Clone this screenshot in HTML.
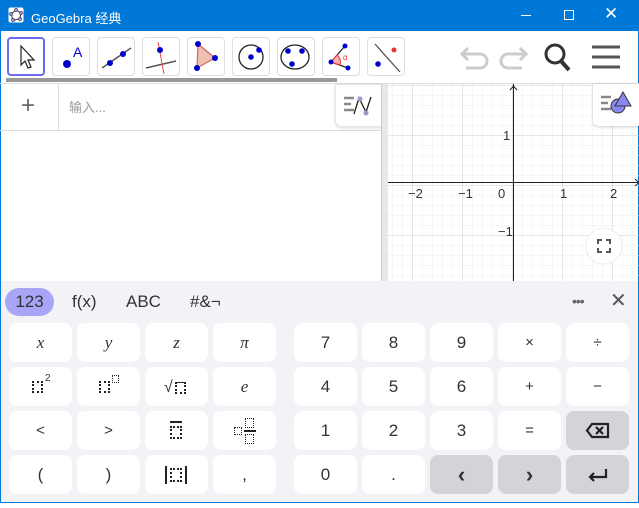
<!DOCTYPE html>
<html><head><meta charset="utf-8"><style>
*{margin:0;padding:0;box-sizing:border-box}
body{width:639px;height:503px;overflow:hidden;background:#fff;font-family:"Liberation Sans","Noto Sans CJK SC",sans-serif;position:relative}
.a{position:absolute}
.tb{left:0;top:0;width:639px;height:31px;background:#0078d7;color:#fff;font-size:13px}
.btn{position:absolute;top:37px;width:38px;height:39px;border:1px solid #ddd;border-radius:4px;background:#fff}
.k{position:absolute;width:63px;height:39px;background:#fff;border-radius:8px;text-align:center;line-height:39px;font-size:17px;color:#333}
.g{background:#d3d3d8}
.it{font-family:"Liberation Serif",serif;font-style:italic}
.tab{position:absolute;top:288px;height:28px;line-height:28px;font-size:17px;color:#333}
.d{position:absolute;border:2px dotted #222}
</style></head><body>
<div class="a tb">
<svg class="a" style="left:8px;top:7px" width="16" height="16"><rect x="0.5" y="0.5" width="15" height="15" rx="2" fill="#fff"/><polygon points="8,3 13,6 12,12 5,13 3,7" fill="none" stroke="#555" stroke-width="1.2"/><g fill="#99f" stroke="#333" stroke-width=".6"><circle cx="8" cy="3" r="1.6"/><circle cx="13" cy="6" r="1.6"/><circle cx="12" cy="12" r="1.6"/><circle cx="5" cy="13" r="1.6"/><circle cx="3" cy="7" r="1.6"/></g></svg>
<div class="a" style="left:31px;top:8px">GeoGebra 经典</div>
<div class="a" style="left:521px;top:15px;width:10px;height:1px;background:#fff"></div>
<div class="a" style="left:564px;top:10px;width:10px;height:10px;border:1px solid #fff"></div>
<div class="a" style="left:604px;top:4px;font-size:17px">✕</div>
</div>
<div class="a" style="left:0;top:31px;width:1px;height:472px;background:#0078d7"></div>
<div class="a" style="right:0;top:31px;width:1px;height:472px;background:#0078d7"></div>
<div class="a" style="left:0;bottom:0;width:639px;height:1px;background:#0078d7"></div>

<div class="btn" style="left:7px;border:2px solid #6b6bf0"><svg width="34" height="35"><path d="M12 7 L12 26 L16 22 L19 29 L22 28 L19 21 L25 21 Z" fill="#fff" stroke="#222" stroke-width="1.2"/></svg></div>
<div class="btn" style="left:52px"><svg width="36" height="37"><circle cx="14" cy="26" r="4" fill="#00c"/><text x="20" y="19" font-size="14" fill="#00c" font-family="Liberation Sans">A</text></svg></div>
<div class="btn" style="left:97px"><svg width="36" height="37"><line x1="4" y1="30" x2="33" y2="10" stroke="#555" stroke-width="1.5"/><circle cx="12" cy="25" r="3" fill="#00c"/><circle cx="25" cy="16" r="3" fill="#00c"/></svg></div>
<div class="btn" style="left:142px"><svg width="36" height="37"><line x1="3" y1="30" x2="33" y2="23" stroke="#555" stroke-width="1.5"/><line x1="15" y1="4" x2="21" y2="36" stroke="#e44" stroke-width="1"/><circle cx="17" cy="12" r="3" fill="#00c"/></svg></div>
<div class="btn" style="left:187px"><svg width="36" height="37"><polygon points="10,6 27,20 9,30" fill="#f0c0b0" stroke="#c66" stroke-width="1.2"/><g fill="#00c"><circle cx="10" cy="6" r="3"/><circle cx="27" cy="20" r="3"/><circle cx="9" cy="30" r="3"/></g></svg></div>
<div class="btn" style="left:232px"><svg width="36" height="37"><circle cx="18" cy="19" r="12" fill="none" stroke="#222" stroke-width="1.3"/><circle cx="18" cy="19" r="2.8" fill="#00c"/><circle cx="26" cy="12" r="2.8" fill="#00c"/></svg></div>
<div class="btn" style="left:277px"><svg width="36" height="37"><ellipse cx="17" cy="19" rx="14" ry="12" fill="none" stroke="#222" stroke-width="1.3"/><g fill="#00c"><circle cx="10" cy="13" r="2.8"/><circle cx="24" cy="13" r="2.8"/><circle cx="14" cy="26" r="2.8"/></g></svg></div>
<div class="btn" style="left:322px"><svg width="36" height="37"><path d="M8 24 L22 8 M8 24 L25 30" stroke="#222" stroke-width="1.2" fill="none"/><path d="M8 24 L14 17 A9 9 0 0 1 17 27 Z" fill="#f8b0b0" stroke="#e33"/><text x="20" y="22" font-size="8" fill="#e33">α</text><g fill="#00c"><circle cx="22" cy="8" r="2.5"/><circle cx="8" cy="24" r="2.5"/><circle cx="25" cy="30" r="2.5"/></g></svg></div>
<div class="btn" style="left:367px"><svg width="36" height="37"><line x1="7" y1="6" x2="32" y2="34" stroke="#555" stroke-width="1.3"/><circle cx="10" cy="26" r="2.8" fill="#00c"/><circle cx="26" cy="12" r="2.5" fill="#e33"/></svg></div>
<svg class="a" style="left:458px;top:42px" width="170" height="34"><g stroke="#ccc" stroke-width="3" fill="none"><path d="M10 6 L4 12 L10 18 M4 12 H22 a7 7 0 0 1 0 14 H8"/><path d="M62 6 L68 12 L62 18 M68 12 H50 a7 7 0 0 0 0 14 H64"/></g><circle cx="97" cy="12" r="9" fill="none" stroke="#333" stroke-width="3"/><line x1="103" y1="19" x2="111" y2="28" stroke="#333" stroke-width="4"/><g stroke="#555" stroke-width="3"><line x1="134" y1="5" x2="162" y2="5"/><line x1="134" y1="15" x2="162" y2="15"/><line x1="134" y1="25" x2="162" y2="25"/></g></svg>
<div class="a" style="left:6px;top:78px;width:331px;height:4px;background:#999"></div>
<div class="a" style="left:0;top:83px;width:639px;height:1px;background:#ddd"></div>

<div class="a" style="left:21px;top:92px;font-size:24px;color:#666;font-weight:300">+</div>
<div class="a" style="left:58px;top:84px;width:1px;height:47px;background:#ddd"></div>
<div class="a" style="left:69px;top:97px;font-size:13px;color:#999">输入...</div>
<div class="a" style="left:0;top:130px;width:381px;height:1px;background:#ddd"></div>
<div class="a" style="left:335px;top:84px;width:47px;height:43px;background:#fff;border:1px solid #e6e6e6;border-radius:0 0 0 6px;box-shadow:0 1px 3px rgba(0,0,0,.15)"><svg width="46" height="42"><g stroke="#888" stroke-width="2.5"><line x1="8" y1="13" x2="18" y2="13"/><line x1="8" y1="19" x2="15" y2="19"/><line x1="8" y1="25" x2="18" y2="25"/></g><path d="M18 29 L23 13 L30 27 L35 12" stroke="#222" stroke-width="1.3" fill="none"/><circle cx="24" cy="14" r="2.5" fill="#99c"/><circle cx="30" cy="28" r="2.5" fill="#99c"/></svg></div>
<div class="a" style="left:381px;top:84px;width:7px;height:197px;background:#e8e8e8;border-left:1px solid #ccc"></div>

<svg class="a" style="left:388px;top:84px" width="251" height="197">
<defs><pattern id="mi" x="-5" y="-8" width="10" height="10" patternUnits="userSpaceOnUse"><path d="M10 0 V10 M0 10 H10" stroke="#eee" stroke-width="1"/></pattern>
<pattern id="ma" x="-25" y="-48" width="50" height="50" patternUnits="userSpaceOnUse"><path d="M50 0 V50 M0 50 H50" stroke="#ccc" stroke-width="1"/></pattern></defs>
<rect width="251" height="197" fill="url(#mi)"/><rect width="251" height="197" fill="url(#ma)"/>
<line x1="125.5" y1="0" x2="125.5" y2="197" stroke="#222"/><line x1="0" y1="98.5" x2="251" y2="98.5" stroke="#222"/>
<path d="M122 6 L125.5 2 L129 6" stroke="#222" fill="none"/><path d="M247 95 L251 98.5 L247 102" stroke="#222" fill="none"/>
<g font-size="13" fill="#333" font-family="Liberation Sans"><text x="20" y="114">−2</text><text x="70" y="114">−1</text><text x="110" y="114">0</text><text x="172" y="114">1</text><text x="222" y="114">2</text><text x="110" y="152">−1</text><text x="115" y="56">1</text></g>
<circle cx="216" cy="162" r="18" fill="#fff" stroke="#eee"/><path d="M210 160 v-4 h4 M218 156 h4 v4 M222 164 v4 h-4 M214 168 h-4 v-4" stroke="#555" stroke-width="2" fill="none"/>
</svg>
<div class="a" style="left:593px;top:84px;width:46px;height:42px;background:#fff;border-radius:0 0 0 6px;box-shadow:0 1px 3px rgba(0,0,0,.2)"><svg width="46" height="42"><g stroke="#888" stroke-width="2.5"><line x1="8" y1="13" x2="18" y2="13"/><line x1="8" y1="19" x2="15" y2="19"/><line x1="8" y1="25" x2="18" y2="25"/></g><circle cx="25" cy="22" r="7" fill="#88e" stroke="#333"/><polygon points="30,8 38,22 22,22" fill="#88e" stroke="#333"/></svg></div>

<div class="a" style="left:1px;top:281px;width:637px;height:221px;background:#f3f2f7"></div>
<div class="tab" style="left:5px;width:49px;background:#a9a5f6;border-radius:14px;text-align:center">123</div>
<div class="tab" style="left:72px">f(x)</div>
<div class="tab" style="left:126px">ABC</div>
<div class="tab" style="left:190px">#&amp;¬</div>
<div class="a" style="left:572px;top:293px;font-size:14px;color:#666;letter-spacing:-1px">•••</div>
<div class="a" style="left:610px;top:288px;font-size:20px;color:#555">✕</div>

<div class="k it" style="left:9px;top:323px">x</div>
<div class="k it" style="left:77px;top:323px">y</div>
<div class="k it" style="left:145px;top:323px">z</div>
<div class="k it" style="left:213px;top:323px">π</div>
<div class="k" style="left:294px;top:323px">7</div>
<div class="k" style="left:362px;top:323px">8</div>
<div class="k" style="left:430px;top:323px">9</div>
<div class="k" style="left:498px;top:323px;font-size:15px">×</div>
<div class="k" style="left:566px;top:323px;font-size:15px">÷</div>

<div class="k" style="left:9px;top:367px"><span class="d" style="left:23px;top:14px;width:11px;height:12px"></span><span class="a" style="left:36px;top:7px;font-size:10px;line-height:10px">2</span></div>
<div class="k" style="left:77px;top:367px"><span class="d" style="left:22px;top:14px;width:11px;height:12px"></span><span class="d" style="left:35px;top:8px;width:7px;height:8px;border-width:1.5px"></span></div>
<div class="k" style="left:145px;top:367px"><span class="a" style="left:19px;top:1px;font-size:16px">√</span><span class="d" style="left:30px;top:15px;width:11px;height:12px;border-top:1.5px solid #222"></span></div>
<div class="k it" style="left:213px;top:367px">e</div>
<div class="k" style="left:294px;top:367px">4</div>
<div class="k" style="left:362px;top:367px">5</div>
<div class="k" style="left:430px;top:367px">6</div>
<div class="k" style="left:498px;top:367px;font-size:15px">+</div>
<div class="k" style="left:566px;top:367px;font-size:15px">−</div>

<div class="k" style="left:9px;top:411px;font-size:15px">&lt;</div>
<div class="k" style="left:77px;top:411px;font-size:15px">&gt;</div>
<div class="k" style="left:145px;top:411px"><span class="a" style="left:25px;top:10px;width:12px;height:2px;background:#222"></span><span class="d" style="left:25px;top:15px;width:12px;height:13px"></span></div>
<div class="k" style="left:213px;top:411px"><span class="d" style="left:21px;top:16px;width:8px;height:8px;border-width:1.5px"></span><span class="d" style="left:32px;top:7px;width:9px;height:10px;border-width:1.5px"></span><span class="a" style="left:31px;top:19px;width:12px;height:2px;background:#222"></span><span class="d" style="left:32px;top:23px;width:9px;height:10px;border-width:1.5px"></span></div>
<div class="k" style="left:294px;top:411px">1</div>
<div class="k" style="left:362px;top:411px">2</div>
<div class="k" style="left:430px;top:411px">3</div>
<div class="k" style="left:498px;top:411px;font-size:15px">=</div>
<div class="k g" style="left:566px;top:411px"><svg width="63" height="39"><path d="M21 19.5 L26 13 H42 V26 H26 Z" fill="none" stroke="#222" stroke-width="2.2"/><path d="M30 16 L37 23 M37 16 L30 23" stroke="#222" stroke-width="2.2"/></svg></div>

<div class="k" style="left:9px;top:455px">(</div>
<div class="k" style="left:77px;top:455px">)</div>
<div class="k" style="left:145px;top:455px"><span class="a" style="left:20px;top:11px;width:2px;height:18px;background:#222"></span><span class="d" style="left:25px;top:13px;width:12px;height:14px"></span><span class="a" style="left:40px;top:11px;width:2px;height:18px;background:#222"></span></div>
<div class="k" style="left:213px;top:455px">,</div>
<div class="k" style="left:294px;top:455px">0</div>
<div class="k" style="left:362px;top:455px">.</div>
<div class="k g" style="left:430px;top:455px;font-weight:bold;font-size:22px">‹</div>
<div class="k g" style="left:498px;top:455px;font-weight:bold;font-size:22px">›</div>
<div class="k g" style="left:566px;top:455px"><svg width="63" height="39"><path d="M40 14 V22 H24 M28 18 L24 22 L28 26" fill="none" stroke="#222" stroke-width="2.2"/></svg></div>
</body></html>
